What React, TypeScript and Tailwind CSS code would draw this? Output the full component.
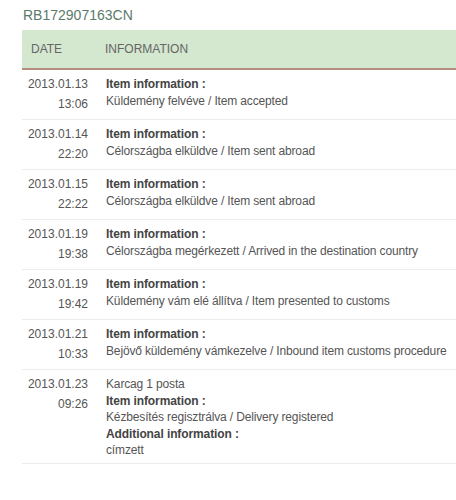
import React from 'react';

type TrackEvent = {
  date: string;
  time: string;
  place?: string;
  info: string;
  extra?: string;
};

const events: TrackEvent[] = [
  { date: '2013.01.13', time: '13:06', info: 'Küldemény felvéve / Item accepted' },
  { date: '2013.01.14', time: '22:20', info: 'Célországba elküldve / Item sent abroad' },
  { date: '2013.01.15', time: '22:22', info: 'Célországba elküldve / Item sent abroad' },
  { date: '2013.01.19', time: '19:38', info: 'Célországba megérkezett / Arrived in the destination country' },
  { date: '2013.01.19', time: '19:42', info: 'Küldemény vám elé állítva / Item presented to customs' },
  { date: '2013.01.21', time: '10:33', info: 'Bejövő küldemény vámkezelve / Inbound item customs procedure' },
  {
    date: '2013.01.23',
    time: '09:26',
    place: 'Karcag 1 posta',
    info: 'Kézbesítés regisztrálva / Delivery registered',
    extra: 'címzett',
  },
];

function Row({ ev }: { ev: TrackEvent }) {
  return (
    <div className="flex border-b border-[#ececec]">
      <div className="w-[66px] shrink-0 pt-[4px] pb-[5px] text-right leading-[20px] text-[#555]">
        <div>{ev.date}</div>
        <div>{ev.time}</div>
      </div>
      <div className="pl-[18px] pt-[6px] pb-[4px] leading-[16.5px] text-[#555]">
        {ev.place && <div className="tracking-[-0.15px]">{ev.place}</div>}
        <div className="font-bold text-[#444] tracking-[-0.1px]">Item information :</div>
        <div className="tracking-[-0.15px]">{ev.info}</div>
        {ev.extra && (
          <>
            <div className="font-bold text-[#444] tracking-[-0.1px]">Additional information :</div>
            <div className="tracking-[-0.15px]">{ev.extra}</div>
          </>
        )}
      </div>
    </div>
  );
}

export default function App() {
  return (
    <div className="w-[456px] h-[500px] overflow-hidden bg-white font-['Liberation_Sans',Arial,sans-serif] text-[12px]">
      <div className="h-[30px] pl-[23px] pt-[6px] text-[14px] leading-[18px] text-[#5b7a6b]">
        RB172907163CN
      </div>
      <div className="ml-[22px]">
        <div className="flex h-[40px] items-center border-b-2 border-[#b58d80] bg-[#d4e7cf] text-[12px] text-[#666]">
          <div className="w-[83px] pl-[9px]">DATE</div>
          <div>INFORMATION</div>
        </div>
        {events.map((ev, i) => (
          <Row key={i} ev={ev} />
        ))}
      </div>
    </div>
  );
}
